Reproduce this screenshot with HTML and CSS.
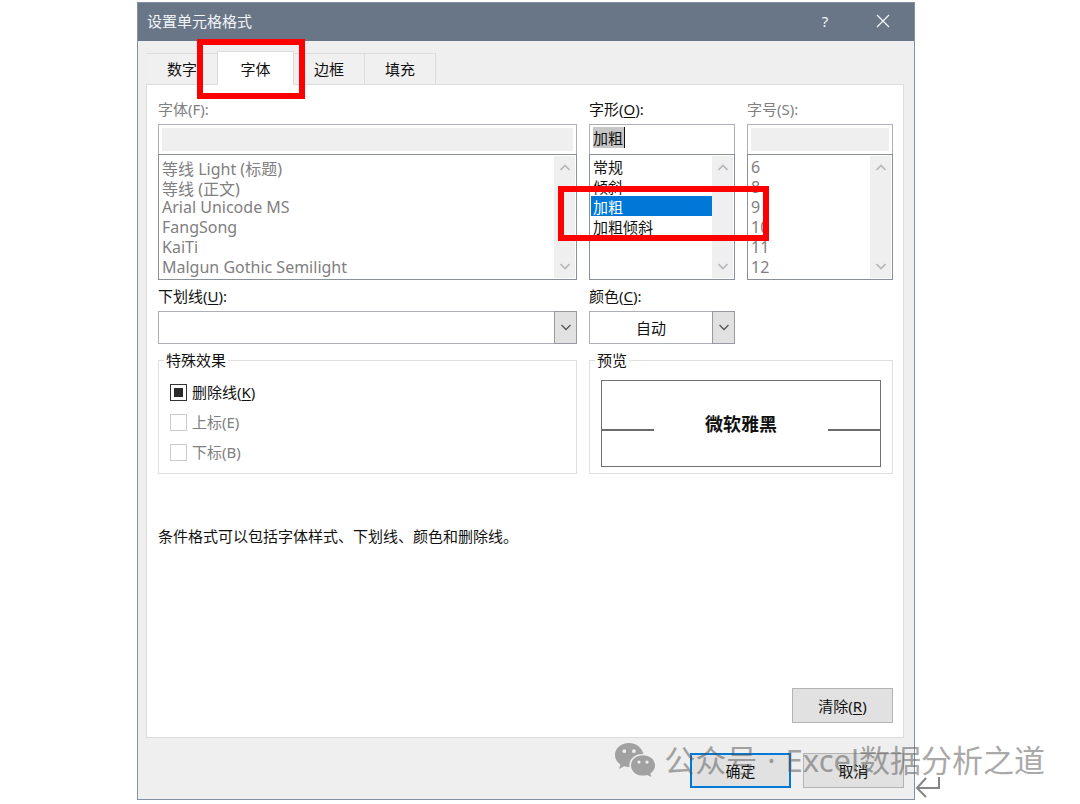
FILE: index.html
```html
<!DOCTYPE html>
<html lang="zh-CN">
<head>
<meta charset="utf-8">
<title>设置单元格格式</title>
<link rel="stylesheet" href="styles.css">
</head>
<body>
<main class="page">
  <section class="dialog" aria-labelledby="dialog-title">
    <header class="titlebar">
      <h1 class="title" id="dialog-title">设置单元格格式</h1>
      <button class="title-button" type="button">?</button>
      <button class="title-button" type="button" aria-label="关闭">
        <svg width="14" height="14" viewBox="0 0 14 14"><path d="M1 1 13 13M13 1 1 13" fill="none" stroke="currentColor" stroke-width="1.3"/></svg>
      </button>
    </header>

    <nav class="tabs">
      <button class="tab tab-first" type="button">数字</button>
      <div class="tab-slot">
        <button class="tab tab-active" type="button">字体</button>
        <span class="mark mark-tab"></span>
      </div>
      <button class="tab" type="button">边框</button>
      <button class="tab" type="button">填充</button>
    </nav>

    <form class="panel">
      <div class="columns">
        <div class="field">
          <label class="label muted" for="font">字体(F):</label>
          <input class="text-box" id="font" type="text" disabled>
          <div class="list">
            <select class="options options-wide" size="6" disabled aria-label="字体列表">
              <option>等线 Light (标题)</option>
              <option>等线 (正文)</option>
              <option>Arial Unicode MS</option>
              <option>FangSong</option>
              <option>KaiTi</option>
              <option>Malgun Gothic Semilight</option>
            </select>
            <span class="scroll">
              <svg width="10" height="7" viewBox="0 0 10 7"><path d="M0.5 6 5 1.5 9.5 6" class="chevron-faint"/></svg>
              <svg width="10" height="7" viewBox="0 0 10 7"><path d="M0.5 1 5 5.5 9.5 1" class="chevron-faint"/></svg>
            </span>
          </div>
        </div>
        <div class="field">
          <label class="label" for="style">字形(<u>O</u>):</label>
          <div class="text-box text-box-live">
            <input class="bare-input" id="style" type="text" value="加粗">
          </div>
          <div class="list">
            <select class="options" size="6" aria-label="字形列表">
              <option>常规</option>
              <option>倾斜</option>
              <option selected>加粗</option>
              <option>加粗倾斜</option>
            </select>
            <span class="scroll">
              <svg width="10" height="7" viewBox="0 0 10 7"><path d="M0.5 6 5 1.5 9.5 6" class="chevron-faint"/></svg>
              <svg width="10" height="7" viewBox="0 0 10 7"><path d="M0.5 1 5 5.5 9.5 1" class="chevron-faint"/></svg>
            </span>
            <span class="mark mark-style"></span>
          </div>
        </div>
        <div class="field">
          <label class="label muted" for="size">字号(S):</label>
          <input class="text-box" id="size" type="text" disabled>
          <div class="list">
            <select class="options options-wide" size="6" disabled aria-label="字号列表">
              <option>6</option>
              <option>8</option>
              <option>9</option>
              <option>10</option>
              <option>11</option>
              <option>12</option>
            </select>
            <span class="scroll">
              <svg width="10" height="7" viewBox="0 0 10 7"><path d="M0.5 6 5 1.5 9.5 6" class="chevron-faint"/></svg>
              <svg width="10" height="7" viewBox="0 0 10 7"><path d="M0.5 1 5 5.5 9.5 1" class="chevron-faint"/></svg>
            </span>
          </div>
        </div>

        <div class="field">
          <label class="label" for="underline">下划线(<u>U</u>):</label>
          <div class="combo">
            <select class="combo-select" id="underline"><option></option></select>
            <span class="combo-arrow"><svg width="10" height="7" viewBox="0 0 10 7"><path d="M0.5 1 5 5.5 9.5 1" class="chevron"/></svg></span>
          </div>
        </div>
        <div class="field">
          <label class="label" for="color">颜色(<u>C</u>):</label>
          <div class="combo">
            <select class="combo-select" id="color"><option>自动</option></select>
            <span class="combo-arrow"><svg width="10" height="7" viewBox="0 0 10 7"><path d="M0.5 1 5 5.5 9.5 1" class="chevron"/></svg></span>
          </div>
        </div>
      </div>

      <div class="groups">
        <fieldset class="group">
          <legend class="legend">特殊效果</legend>
          <div class="checks">
            <label class="check"><input class="box" type="checkbox" checked><span>删除线(<u>K</u>)</span></label>
            <label class="check muted"><input class="box" type="checkbox" disabled><span>上标(E)</span></label>
            <label class="check muted"><input class="box" type="checkbox" disabled><span>下标(B)</span></label>
          </div>
        </fieldset>
        <fieldset class="group">
          <legend class="legend">预览</legend>
          <div class="preview">
            <span class="rule"></span>
            <span class="sample">微软雅黑</span>
            <span class="rule"></span>
          </div>
        </fieldset>
      </div>

      <p class="note">条件格式可以包括字体样式、下划线、颜色和删除线。</p>
      <button class="button clear" type="button">清除(<u>R</u>)</button>
    </form>

    <footer class="footer">
      <button class="button button-default" type="button">确定</button>
      <button class="button" type="button">取消</button>
    </footer>
  </section>

  <div class="watermark">
    <svg width="42" height="36" viewBox="0 0 42 36">
      <path fill="currentColor" fill-rule="evenodd" d="M15 1C7 1 1 6.200 1 13c0 4 2 7.200 5.400 9.400L5 27l5.200-2.700c1.900.5 3.600.8 5.400.7C14.400 18 20 11.600 29.400 12 28 5.500 22 1 15 1ZM10.300 7.300a1.900 1.900 0 1 1 0 3.800 1.900 1.900 0 0 1 0-3.800Zm9.600 0a1.900 1.900 0 1 1 0 3.800 1.900 1.900 0 0 1 0-3.800Z"/>
      <path fill="currentColor" fill-rule="evenodd" d="M29 13.200c-6.800 0-12 4.500-12 10.200s5.200 10.200 12 10.200c1.500 0 3-.2 4.400-.7l4 2.100-1.100-3.600c2.900-2 4.700-4.600 4.700-8 0-5.700-5.200-10.200-12-10.200ZM25 18.500a1.600 1.600 0 1 1 0 3.200 1.600 1.600 0 0 1 0-3.200Zm8 0a1.600 1.600 0 1 1 0 3.200 1.600 1.600 0 0 1 0-3.200Z"/>
    </svg>
    <span>公众号 <span class="dot">·</span> Excel数据分析之道</span>
  </div>
  <svg class="return-mark" width="26" height="22" viewBox="0 0 26 22"><path d="M24 1V12H2M11 2 2 12 11 21" fill="none" stroke="#868686" stroke-width="2"/></svg>
</main>
</body>
</html>
```
FILE: styles.css
```css
* {
  box-sizing: border-box;
}

body {
  margin: 0;
  background: #fff;
  color: #111;
  font: 15px/20px "Noto Sans", "Noto Sans CJK SC", sans-serif;
}

button,
input,
select {
  font: inherit;
  color: inherit;
}

u {
  text-underline-offset: 2px;
}

.page {
  position: relative;
  display: flex;
  min-height: 100vh;
  padding: 2px 165px 4px 137px;
}

.dialog {
  display: flex;
  flex: 1;
  flex-direction: column;
  min-width: 0;
  border: 1px solid #8390a5;
  background: #efefef;
}

.titlebar {
  display: flex;
  align-items: center;
  height: 38px;
  padding: 0 2px 2px 9px;
  background: #687688;
  color: #f2f4f7;
}

.title {
  flex: 1;
  margin: 0;
  font-size: 15px;
  font-weight: 400;
}

.title-button {
  display: flex;
  align-items: center;
  justify-content: center;
  width: 58px;
  height: 36px;
  padding: 0;
  border: 0;
  background: none;
}

.tabs {
  display: flex;
  align-items: flex-end;
  padding: 10px 9px 0;
}

.tab {
  width: 71px;
  height: 31px;
  padding: 0;
  border: 1px solid #dcdcdc;
  border-width: 1px 1px 0 0;
  background: #f0f0f0;
}

.tab-first {
  width: 70px;
  border-right: 0;
}

.tab-slot {
  position: relative;
  z-index: 1;
  margin-bottom: -1px;
}

.tab-active {
  display: block;
  width: 77px;
  height: 34px;
  border-width: 1px 1px 0;
  background: #fff;
}

.mark {
  position: absolute;
  z-index: 2;
  border: 6px solid #f00;
  pointer-events: none;
}

.mark-tab {
  inset: -12px -11px -14px -20px;
}

.mark-style {
  inset: 31px -35px 38px -32px;
}

.panel {
  display: flex;
  flex: 1;
  flex-direction: column;
  margin: 0 10px 0 8px;
  padding: 14px 10px 14px 11px;
  border: 1px solid #dcdcdc;
  background: #fff;
}

.columns {
  display: grid;
  grid-template-columns: 1fr 146px 146px;
  gap: 6px 12px;
}

.field {
  display: flex;
  flex-direction: column;
  min-width: 0;
}

.label {
  margin-bottom: 5px;
}

.muted {
  color: #808080;
}

.text-box {
  width: 100%;
  height: 30px;
  padding: 0 3px;
  border: 1px solid #adb0b8;
  border-bottom: 0;
  background: #efefef;
  box-shadow: inset 0 0 0 3px #fff;
}

.text-box-live {
  display: flex;
  padding: 2px 3px;
  background: #fff;
}

.bare-input {
  width: 32px;
  height: 21px;
  padding: 0;
  border: 0;
  border-right: 1px solid #111;
  outline: 0;
  background: #c6c6c6;
}

.list {
  position: relative;
  display: flex;
  height: 126px;
  padding: 1px;
  border: 1px solid #8b8f98;
}

.options {
  flex: 1;
  min-width: 0;
  padding: 0;
  overflow: hidden;
  border: 0;
  border-radius: 0;
  outline: 0;
  background: #fff;
  appearance: none;
}

.options option {
  height: 20px;
  min-height: 20px;
  padding: 0 2px;
  overflow: visible;
  color: #111;
  line-height: 20px;
}

.options-wide {
  font-size: 16px;
}

.options:disabled {
  opacity: 1;
}

.options:disabled option {
  color: #808080;
}

.options option:checked {
  background: linear-gradient(#0078d7, #0078d7);
  color: #fff;
}

.scroll {
  display: flex;
  flex-direction: column;
  align-items: center;
  justify-content: space-between;
  width: 21px;
  padding: 8px 0;
  background: #efefef;
}

.chevron,
.chevron-faint {
  fill: none;
  stroke: #555;
  stroke-width: 1.3;
}

.chevron-faint {
  stroke: #b8b8b8;
  stroke-width: 1.7;
}

.combo {
  position: relative;
}

.combo-select {
  display: block;
  width: 100%;
  height: 33px;
  padding: 0 22px 0 0;
  border: 1px solid #adb0b8;
  border-radius: 0;
  background: #fff;
  text-align-last: center;
  appearance: none;
}

.combo-arrow {
  position: absolute;
  inset: 0 0 0 auto;
  display: flex;
  align-items: center;
  justify-content: center;
  width: 23px;
  border: 1px solid #979aa1;
  background: #e1e1e1;
  pointer-events: none;
}

.groups {
  display: grid;
  grid-template-columns: 1fr 304px;
  gap: 12px;
  margin-top: 6px;
}

.group {
  min-width: 0;
  height: 124px;
  margin: 0;
  padding: 10px 11px;
  border: 1px solid #dfdfdf;
}

.legend {
  margin-left: -6px;
  padding: 0 2px;
}

.checks {
  display: flex;
  flex-direction: column;
  gap: 10px;
  padding-top: 2px;
}

.check {
  display: flex;
  align-items: center;
  gap: 5px;
}

.box {
  display: grid;
  place-items: center;
  width: 17px;
  height: 17px;
  margin: 0;
  border: 1px solid #ccc;
  background: #fff;
  appearance: none;
}

.box:checked {
  border-color: #333;
}

.box:checked::before {
  width: 9px;
  height: 9px;
  background: #2b2b2b;
  content: "";
}

.preview {
  display: grid;
  grid-template-columns: 52px 1fr 52px;
  height: 87px;
  border: 1px solid #707070;
}

.rule {
  height: 50px;
  border-bottom: 2px solid #6b6b6b;
}

.sample {
  padding-top: 30px;
  font-size: 18px;
  font-weight: 700;
  line-height: 26px;
  text-align: center;
}

.note {
  margin: 52px 0 20px;
}

.button {
  width: 101px;
  height: 35px;
  padding: 0;
  border: 1px solid #b4b4b4;
  background: #e1e1e1;
}

.button-default {
  border: 2px solid #0078d7;
}

.clear {
  align-self: flex-end;
  margin-top: auto;
}

.footer {
  display: flex;
  justify-content: flex-end;
  gap: 12px;
  padding: 15px 10px 11px;
}

.watermark {
  position: absolute;
  right: 35px;
  bottom: 26px;
  z-index: 3;
  display: flex;
  align-items: center;
  gap: 8px;
  color: #555;
  font: 31px/36px "Noto Sans", "Noto Sans CJK SC", sans-serif;
  opacity: 0.5;
  pointer-events: none;
}

.dot {
  padding: 0 2px;
}

.return-mark {
  position: absolute;
  right: 139px;
  bottom: 6px;
}
```
